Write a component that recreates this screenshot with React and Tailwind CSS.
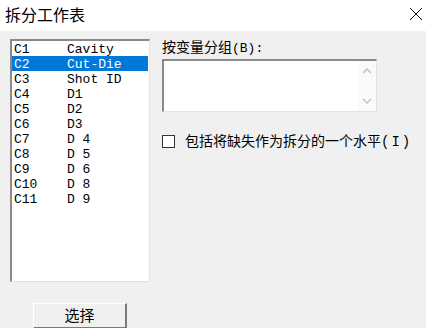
import React from 'react';

const COLUMNS = [
  ['C1', 'Cavity'],
  ['C2', 'Cut-Die'],
  ['C3', 'Shot ID'],
  ['C4', 'D1'],
  ['C5', 'D2'],
  ['C6', 'D3'],
  ['C7', 'D 4'],
  ['C8', 'D 5'],
  ['C9', 'D 6'],
  ['C10', 'D 8'],
  ['C11', 'D 9'],
];

const UI_FONT = { fontFamily: '"Noto Sans CJK SC", "Noto Sans", sans-serif' };
const MONO_FONT = { fontFamily: '"Liberation Mono", "DejaVu Sans Mono", monospace' };

export default function App() {
  return (
    <div className="w-[426px] h-[328px] overflow-hidden bg-[#f0f0f0] text-black" style={UI_FONT}>
      {/* Title bar */}
      <div className="h-[31px] bg-white flex items-center justify-between pl-[5px] pr-[3px]">
        <span className="text-[16px] leading-none -mt-[3px]">拆分工作表</span>
        <svg width="14" height="14" viewBox="0 0 14 14" className="-mt-[3px]">
          <path d="M1 1 L13 13 M13 1 L1 13" stroke="#111" strokeWidth="1" />
        </svg>
      </div>

      <div className="flex pl-[10px] pt-[8px]">
        {/* Left column */}
        <div className="w-[140px] flex flex-col">
          <div className="h-[243px] bg-white border-t-2 border-l-2 border-[#8a8a8a] border-r border-b border-r-[#e3e3e3] border-b-[#e3e3e3] pr-[1px]">
            {COLUMNS.map(([c, name], i) => (
              <div
                key={c}
                className={`h-[15px] flex items-center pl-[2px] pt-[2px] text-[13px] leading-none ${i === 1 ? 'bg-[#0078d7] text-white' : ''}`}
                style={MONO_FONT}
              >
                <span className="w-[53px]">{c}</span>
                <span>{name}</span>
              </div>
            ))}
          </div>
          <button className="mt-[21px] ml-[23px] w-[94px] h-[26px] bg-[#f0f0f0] border-t border-l border-white border-r-2 border-b-2 border-r-[#7a7a7a] border-b-[#7a7a7a] text-[15px] leading-none flex items-center justify-center pb-[2px]">
            选择
          </button>
        </div>

        {/* Right column */}
        <div className="ml-[12px] flex flex-col">
          <div className="h-[20px] text-[14px] leading-none">
            按变量分组<span style={MONO_FONT} className="text-[13px]">(B):</span>
          </div>
          <div className="w-[215px] h-[53px] bg-white border-t-2 border-l-2 border-[#8a8a8a] border-r border-b border-r-[#e3e3e3] border-b-[#e3e3e3] flex justify-end">
            <div className="w-[18px] h-full flex flex-col items-center justify-between py-[7px] bg-[#fafafa]">
              <svg width="10" height="6" viewBox="0 0 10 6">
                <path d="M1 5 L5 1 L9 5" fill="none" stroke="#bfbfbf" strokeWidth="1.3" />
              </svg>
              <svg width="10" height="6" viewBox="0 0 10 6">
                <path d="M1 1 L5 5 L9 1" fill="none" stroke="#bfbfbf" strokeWidth="1.3" />
              </svg>
            </div>
          </div>
          <label className="flex items-center mt-[21px]">
            <span className="w-[13px] h-[13px] bg-white border border-[#333]" />
            <span className="ml-[10px] text-[14px] leading-none">
              包括将缺失作为拆分的一个水平
              <span style={MONO_FONT} className="tracking-[2px] text-[14px]">(I)</span>
            </span>
          </label>
        </div>
      </div>
    </div>
  );
}
